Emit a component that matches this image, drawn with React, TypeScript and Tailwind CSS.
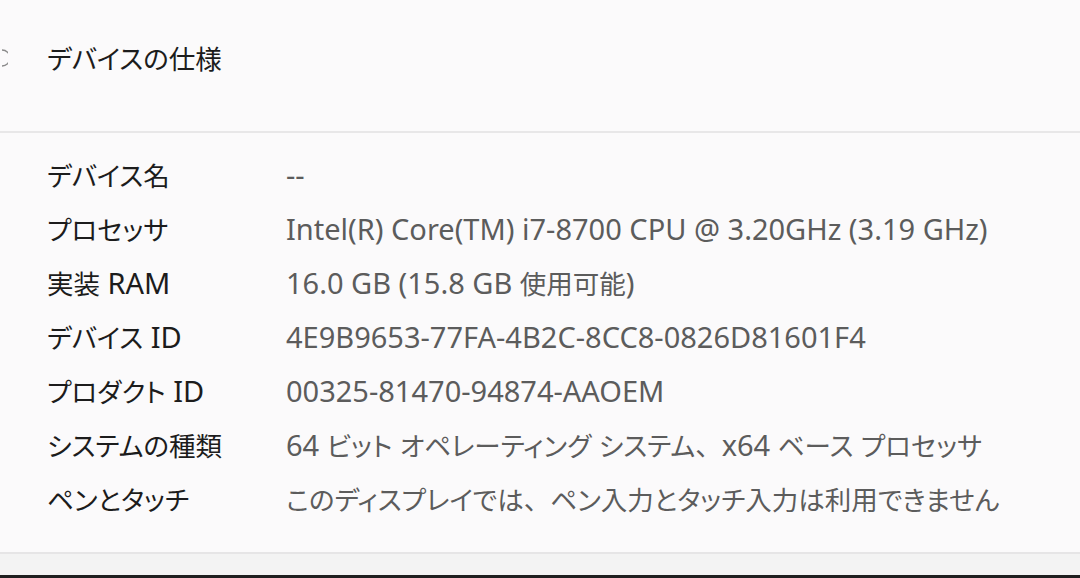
import React from "react";

const rows: [string, string][] = [
  ["デバイス名", "--"],
  ["プロセッサ", "Intel(R) Core(TM) i7-8700 CPU @ 3.20GHz (3.19 GHz)"],
  ["実装 RAM", "16.0 GB (15.8 GB 使用可能)"],
  ["デバイス ID", "4E9B9653-77FA-4B2C-8CC8-0826D81601F4"],
  ["プロダクト ID", "00325-81470-94874-AAOEM"],
  ["システムの種類", "64 ビット オペレーティング システム、x64 ベース プロセッサ"],
  ["ペンとタッチ", "このディスプレイでは、ペン入力とタッチ入力は利用できません"],
];

function Mixed({ text }: { text: string }) {
  const parts = text.split(/(、|[\u3040-\u30ff\u4e00-\u9fff]+)/).filter((p) => p !== "");
  return (
    <>
      {parts.map((p, i) => {
        if (p === "、") {
          return (
            <span key={i} className="text-[26.5px] [font-feature-settings:normal]">
              {p}
            </span>
          );
        }
        if (/[\u3040-\u30ff\u4e00-\u9fff]/.test(p)) {
          return (
            <span key={i} className="text-[26.5px]">
              {p}
            </span>
          );
        }
        return <span key={i}>{p}</span>;
      })}
    </>
  );
}

export default function App() {
  return (
    <div
      className="w-[1080px] h-[578px] overflow-hidden bg-[#fbfafb] flex flex-col [font-feature-settings:'palt']"
      style={{ fontFamily: '"Noto Sans", "Noto Sans CJK JP", sans-serif' }}
    >
      <div className="h-[131px] shrink-0 flex items-start pt-[31px]">
        <svg width="8" height="54" viewBox="0 0 8 54" className="shrink-0">
          <path d="M2 19 A8 8 0 0 1 2 35" fill="none" stroke="#8a8a8a" strokeWidth="1.5" />
        </svg>
        <div className="ml-[39px] text-[29px] leading-[54px] text-[#1c1c1c]">
          <Mixed text="デバイスの仕様" />
        </div>
      </div>
      <div className="h-[2px] bg-[#e8e7e8] shrink-0" />
      <div className="flex-1 flex flex-col pt-[15px]">
        {rows.map(([k, v]) => (
          <div key={k} className="flex h-[54px] items-center text-[29px] leading-[54px]">
            <div className="w-[286px] pl-[47px] shrink-0 text-[#1c1c1c] whitespace-nowrap">
              <Mixed text={k} />
            </div>
            <div className="text-[#5c5c5c] whitespace-nowrap">
              <Mixed text={v} />
            </div>
          </div>
        ))}
      </div>
      <div className="h-[2px] bg-[#e6e5e6] shrink-0" />
      <div className="h-[21px] bg-[#f3f3f3] shrink-0" />
      <div className="h-[3px] bg-[#1f1f1f] shrink-0" />
    </div>
  );
}
